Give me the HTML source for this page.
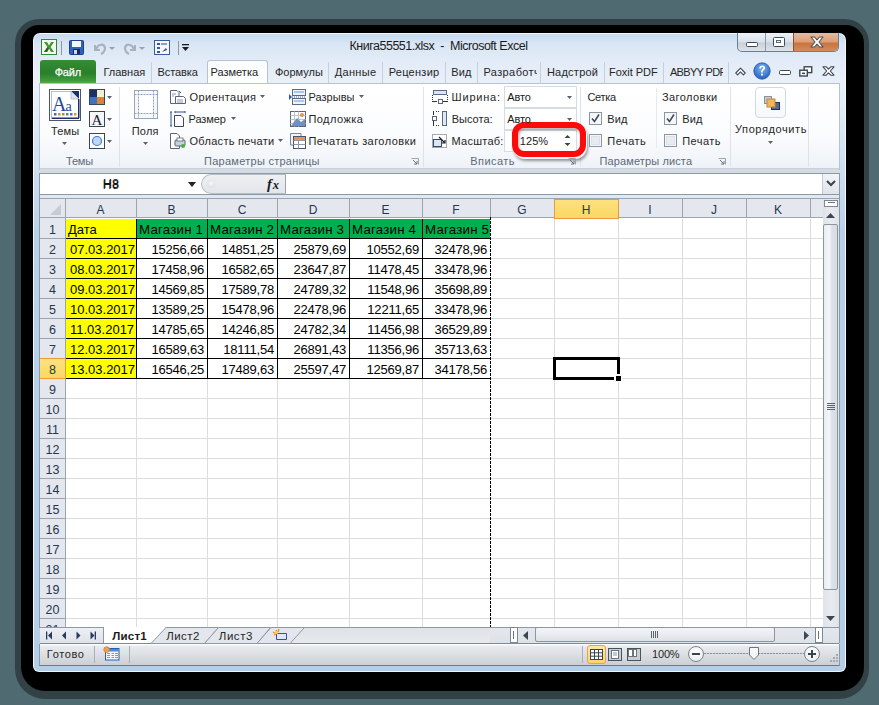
<!DOCTYPE html>
<html><head><meta charset="utf-8">
<style>
*{margin:0;padding:0;box-sizing:border-box}
html,body{width:879px;height:705px;overflow:hidden;background:#4f6a71;font-family:"Liberation Sans",sans-serif;font-size:12px;color:#1e1e1e}
.a{position:absolute}
#shadowd{left:15px;top:19px;width:854px;height:680px;border-radius:24px 24px 30px 30px;background:rgba(0,0,0,.38)}
#shadow{left:21px;top:25px;width:843px;height:666px;border-radius:18px 18px 24px 24px;background:#000}
#win{left:33px;top:33px;width:813px;height:639px;border-radius:7px 7px 6px 6px;background:linear-gradient(#c6daef,#d9e6f5 10px,#e2ebf7 26px,#e9f0f9 50px,#cfe0f1 130px,#b7d1ea 200px,#b3cee9);border:1px solid #f4f8fd;border-bottom-color:#eef4fb}
.t{white-space:nowrap;line-height:1}
</style></head><body>
<div id="shadowd" class="a"></div>
<div id="shadow" class="a"></div>
<div id="win" class="a"></div>

<!-- title bar -->
<!-- excel icon -->
<svg class="a" style="left:41px;top:39px" width="16" height="16" viewBox="0 0 16 16">
<rect x="0.5" y="0.5" width="15" height="15" fill="#f4f8f0" stroke="#2e8b2e"/>
<path d="M3 3 L6 3 L8 6.5 L10 3 L13 3 L9.6 8 L13 13 L10 13 L8 9.5 L6 13 L3 13 L6.4 8 Z" fill="#3c9a2a"/>
<path d="M3 13 L6 13 L8 9.5 L6.4 8 Z" fill="#1f6b1f"/>
</svg>
<div class="a" style="left:61px;top:41px;width:1px;height:14px;background:#8c98a8"></div>
<!-- save icon -->
<svg class="a" style="left:69px;top:40px" width="15" height="15" viewBox="0 0 15 15">
<rect x="0.5" y="0.5" width="14" height="14" rx="1" fill="#2f62b8" stroke="#1f3f8a"/>
<rect x="3" y="1" width="9" height="6" fill="#f2f5fa"/>
<rect x="4" y="9" width="7" height="5" fill="#1a2a50"/>
<rect x="5" y="10" width="3" height="4" fill="#d0d8e8"/>
</svg>
<!-- undo/redo -->
<svg class="a" style="left:92px;top:40px" width="60" height="15" viewBox="0 0 60 15">
<path d="M3 5 L3 10 L8 10" fill="none" stroke="#a9b1bb" stroke-width="2"/>
<path d="M4 9 C6 4 12 3 13 8 C13 11 11 13 9 14" fill="none" stroke="#a9b1bb" stroke-width="2.2"/>
<path d="M17 7 L23 7 L20 10 Z" fill="#9aa3ad"/>
<path d="M43 5 L43 10 L38 10" fill="none" stroke="#a9b1bb" stroke-width="2"/>
<path d="M42 9 C40 4 34 3 33 8 C33 11 35 13 37 14" fill="none" stroke="#a9b1bb" stroke-width="2.2"/>
<path d="M47 7 L53 7 L50 10 Z" fill="#9aa3ad"/>
</svg>
<!-- form icon -->
<svg class="a" style="left:154px;top:40px" width="16" height="15" viewBox="0 0 16 15">
<rect x="0.5" y="0.5" width="15" height="14" fill="#f4f7fb" stroke="#3a5a9a"/>
<rect x="3" y="3" width="3" height="2" fill="#3a5aa0"/><rect x="7" y="3" width="6" height="2" fill="#8aa0c8"/>
<rect x="3" y="7" width="3" height="2" fill="#3a5aa0"/><rect x="3" y="11" width="3" height="2" fill="#3a5aa0"/>
<path d="M8 12 L12 8 L13 10 Z" fill="#2a4a8a"/>
</svg>
<div class="a" style="left:178px;top:41px;width:1px;height:14px;background:#8c98a8"></div>
<svg class="a" style="left:181px;top:43px" width="9" height="9" viewBox="0 0 9 9"><rect x="1" y="1" width="7" height="1.3" fill="#1a1a1a"/><path d="M1 4 L8 4 L4.5 8 Z" fill="#1a1a1a"/></svg>

<!-- window buttons -->
<div class="a" style="left:737px;top:33px;width:102px;height:19px;border:1px solid #6e7f94;border-top:none;border-radius:0 0 5px 5px;background:linear-gradient(#eef2f7,#d9e0e8 50%,#c8d0da 55%,#dde3ea);overflow:hidden">
 <div class="a" style="left:27px;top:0;width:1px;height:19px;background:#8a98aa"></div>
 <div class="a" style="left:55px;top:0;width:46px;height:19px;background:linear-gradient(#e6bc9f,#dc9f78 45%,#c9743f 55%,#d68e62);border-left:1px solid #8a5030"></div>
</div>
<div class="a" style="left:746px;top:42px;width:12px;height:5px;border:1.5px solid #3e4a5a;border-radius:1.5px;background:#fff"></div>
<div class="a" style="left:773px;top:37px;width:12px;height:10px;border:1.5px solid #3e4a5a;border-radius:1.5px;background:#fff"><div class="a" style="left:2px;top:2px;width:5px;height:3px;border:1px solid #5a6676"></div></div>
<svg class="a" style="left:810px;top:36px" width="14" height="12" viewBox="0 0 14 12"><path d="M1 1 L4.5 1 L7 3.8 L9.5 1 L13 1 L9 6 L13 11 L9.5 11 L7 8.2 L4.5 11 L1 11 L5 6 Z" fill="#fff" stroke="#4a5260" stroke-width="1.1" stroke-linejoin="round"/></svg>

<!-- tabs -->
<div class="a" style="left:40px;top:60px;width:56px;height:24px;border-radius:3px 3px 0 0;background:linear-gradient(#358d35,#2a7f2a 55%,#3f9a3a 85%,#5bb04a);"></div>
<div class="a" style="left:207px;top:60px;width:61px;height:24px;border:1px solid #b6c3d4;border-bottom:none;border-radius:3px 3px 0 0;background:linear-gradient(#fbfcfe,#fff)"></div>
<div class="a" style="left:151px;top:62px;width:1px;height:21px;background:#c5d0de"></div>
<div class="a" style="left:328px;top:62px;width:1px;height:21px;background:#c5d0de"></div>
<div class="a" style="left:382px;top:62px;width:1px;height:21px;background:#c5d0de"></div>
<div class="a" style="left:445px;top:62px;width:1px;height:21px;background:#c5d0de"></div>
<div class="a" style="left:477px;top:62px;width:1px;height:21px;background:#c5d0de"></div>
<div class="a" style="left:540px;top:62px;width:1px;height:21px;background:#c5d0de"></div>
<div class="a" style="left:604px;top:62px;width:1px;height:21px;background:#c5d0de"></div>
<div class="a" style="left:663px;top:62px;width:1px;height:21px;background:#c5d0de"></div>
<div class="a" style="left:728px;top:62px;width:1px;height:21px;background:#c5d0de"></div>
<!-- ribbon right icons -->
<svg class="a" style="left:735px;top:67px" width="11" height="9" viewBox="0 0 11 9"><path d="M0.8 6 L5.5 1.2 L10.2 6 L8.4 7.8 L5.5 4.9 L2.6 7.8 Z" fill="#fff" stroke="#3e4652" stroke-width="1.1" stroke-linejoin="round"/></svg>
<svg class="a" style="left:753px;top:62px" width="18" height="18" viewBox="0 0 18 18"><defs><radialGradient id="hg" cx="50%" cy="35%" r="60%"><stop offset="0" stop-color="#7fb6f0"/><stop offset="1" stop-color="#2a66c4"/></radialGradient></defs><circle cx="9" cy="9" r="8.2" fill="url(#hg)" stroke="#2358a8" stroke-width=".8"/><path d="M6.2 6.6 C6.2 4.6 7.5 3.6 9.2 3.6 C11 3.6 12.1 4.7 12.1 6.1 C12.1 7.6 10.6 8.1 10 8.8 C9.7 9.2 9.7 9.7 9.7 10.5 L8.1 10.5 C8.1 9.3 8.2 8.6 8.9 7.9 C9.6 7.2 10.3 7 10.3 6.1 C10.3 5.5 9.9 5.1 9.2 5.1 C8.4 5.1 8 5.6 8 6.6 Z" fill="#fff"/><rect x="8" y="11.6" width="1.9" height="1.9" fill="#fff"/></svg>
<div class="a" style="left:779px;top:70px;width:12px;height:5px;border:1.5px solid #3e4652;border-radius:1.5px;background:#fff"></div>
<svg class="a" style="left:799px;top:66px" width="14" height="11" viewBox="0 0 14 11"><rect x="5.2" y="0.8" width="7.5" height="5.8" fill="#fff" stroke="#3e4652" stroke-width="1.4"/><rect x="0.8" y="4.2" width="7.5" height="5.8" fill="#fff" stroke="#3e4652" stroke-width="1.4"/><rect x="3" y="6.6" width="3" height="1.5" fill="#3e4652"/></svg>
<svg class="a" style="left:822px;top:66px" width="13" height="10" viewBox="0 0 13 10"><path d="M1 0.8 L4.2 0.8 L6.5 3.2 L8.8 0.8 L12 0.8 L8.3 5 L12 9.2 L8.8 9.2 L6.5 6.8 L4.2 9.2 L1 9.2 L4.7 5 Z" fill="#fff" stroke="#3e4652" stroke-width="1.1" stroke-linejoin="round"/></svg>

<!-- ribbon body -->
<div class="a" style="left:39px;top:83px;width:801px;height:87px;background:linear-gradient(#ffffff,#fbfcfe 60%,#eef2f7);border:1px solid #b6c3d4;border-bottom-color:#a9b6c6"></div>
<div class="a" style="left:40px;top:168px;width:799px;height:2px;background:#c7d0db"></div>
<!-- group separators -->
<div class="a" style="left:119px;top:87px;width:1px;height:80px;background:#dde3ea"></div>
<div class="a" style="left:423px;top:87px;width:1px;height:80px;background:#dde3ea"></div>
<div class="a" style="left:580px;top:87px;width:1px;height:80px;background:#dde3ea"></div>
<div class="a" style="left:656px;top:88px;width:1px;height:60px;background:#e6eaef"></div>
<div class="a" style="left:730px;top:87px;width:1px;height:80px;background:#dde3ea"></div>
<div class="a" style="left:808px;top:87px;width:1px;height:80px;background:#dde3ea"></div>

<!-- Themes -->
<svg class="a" style="left:49px;top:89px" width="32" height="32" viewBox="0 0 32 32">
<rect x="0.5" y="0.5" width="31" height="31" fill="#fff" stroke="#4a5566"/>
<rect x="2.5" y="2.5" width="27" height="27" fill="#fff" stroke="#b9c0ca"/>
<path d="M22 2 L30 2 L30 10 Z" fill="#1f2d6e"/><path d="M22 2 L22 10 L30 10 Z" fill="#dde3ee" stroke="#9aa3b0" stroke-width=".6"/>
<rect x="29" y="10" width="1.5" height="19" fill="#1f2d6e"/><rect x="3" y="28.5" width="27" height="1.5" fill="#1f2d6e"/>
<text x="3" y="21.5" font-family="Liberation Serif" font-size="20" fill="#24479a">A</text>
<text x="16.5" y="21.5" font-family="Liberation Serif" font-size="14" fill="#24479a">a</text>
<rect x="5" y="24" width="2.5" height="2.5" fill="#3c69b8"/><rect x="9" y="24" width="2.5" height="2.5" fill="#d9853a"/><rect x="13" y="24" width="2.5" height="2.5" fill="#7aa05a"/><rect x="17" y="24" width="2.5" height="2.5" fill="#6a7aa0"/><rect x="21" y="24" width="2.5" height="2.5" fill="#3f78c8"/><rect x="25" y="24" width="2.5" height="2.5" fill="#e09a30"/>
</svg>
<svg class="a" style="left:62px;top:142px" width="5" height="3"><path d="M0 0 L5 0 L2.5 3 Z" fill="#5a626c"/></svg>
<svg class="a" style="left:89px;top:89px" width="16" height="16" viewBox="0 0 16 16">
<rect x="0.5" y="0.5" width="15" height="15" fill="#fff" stroke="#3a4556"/>
<rect x="1" y="1" width="7" height="7" fill="#1c3068"/><rect x="8" y="1" width="7" height="7" fill="#f3f0d2"/>
<rect x="1" y="8" width="7" height="7" fill="#3f73c2"/><rect x="8" y="8" width="7" height="7" fill="#d9823a"/>
</svg>
<svg class="a" style="left:107px;top:96px" width="5" height="3"><path d="M0 0 L5 0 L2.5 3 Z" fill="#5a626c"/></svg>
<svg class="a" style="left:89px;top:111px" width="16" height="16" viewBox="0 0 16 16">
<rect x="0.5" y="0.5" width="15" height="15" fill="#f3f6fa" stroke="#3a4556"/>
<text x="8" y="14" font-family="Liberation Serif" font-size="15" fill="#151b2a" text-anchor="middle">A</text>
</svg>
<svg class="a" style="left:107px;top:118px" width="5" height="3"><path d="M0 0 L5 0 L2.5 3 Z" fill="#5a626c"/></svg>
<svg class="a" style="left:89px;top:133px" width="16" height="16" viewBox="0 0 16 16">
<rect x="0.5" y="0.5" width="15" height="15" fill="#fff" stroke="#3a4556"/>
<circle cx="8" cy="8" r="4.5" fill="#bcd8f5" stroke="#3f7dd0" stroke-width="1.2"/>
</svg>
<svg class="a" style="left:107px;top:140px" width="5" height="3"><path d="M0 0 L5 0 L2.5 3 Z" fill="#5a626c"/></svg>

<!-- Поля -->
<svg class="a" style="left:133px;top:90px" width="26" height="30" viewBox="0 0 26 30">
<rect x="1.5" y="0.5" width="23" height="28" fill="#f6f7f9" stroke="#9aa6b4"/>
<path d="M1.5 4.5 H24.5 M1.5 23.5 H24.5 M5.5 0.5 V28.5 M20.5 0.5 V28.5" stroke="#8fa4bd" stroke-width="1" stroke-dasharray="2 1"/>
<rect x="6" y="5" width="14" height="18" fill="#fff"/>
</svg>
<svg class="a" style="left:143px;top:142px" width="5" height="3"><path d="M0 0 L5 0 L2.5 3 Z" fill="#5a626c"/></svg>

<!-- Page setup small buttons -->
<svg class="a" style="left:170px;top:90px" width="16" height="14" viewBox="0 0 16 14">
<path d="M0.5 0.5 H7 L9 2.5 V13.5 H0.5 Z" fill="#fff" stroke="#5a6678"/>
<path d="M5.5 6.5 H13.5 L15.5 8.5 V13.5 H5.5 Z" fill="#fff" stroke="#5a6678"/>
<path d="M2 4 H6 M2 6 H4 M7 10 H13 M7 12 H13" stroke="#8a98b0"/>
<path d="M9 1 L11 3" stroke="#2a58a8"/>
</svg>
<svg class="a" style="left:260px;top:95px" width="6" height="3"><path d="M0 0 L5 0 L2.5 3 Z" fill="#5a626c"/></svg>
<svg class="a" style="left:170px;top:111px" width="16" height="16" viewBox="0 0 16 16">
<path d="M1 1 V15 M0 1 H2 M0 15 H2 M5 1 H15 M5 0 V2 M15 0 V2" stroke="#2f4f9a" stroke-width="1"/>
<path d="M4.5 4.5 H11 L13.5 7 V15.5 H4.5 Z" fill="#fff" stroke="#3d4858"/>
</svg>
<svg class="a" style="left:231px;top:117px" width="6" height="3"><path d="M0 0 L5 0 L2.5 3 Z" fill="#5a626c"/></svg>
<svg class="a" style="left:170px;top:133px" width="16" height="16" viewBox="0 0 16 16">
<path d="M0.5 0.5 H7 L9.5 3 V15.5 H0.5 Z" fill="#fff" stroke="#5a6678"/>
<rect x="5" y="7" width="10" height="6" rx="1" fill="#c9d2dc" stroke="#5a6678"/>
<rect x="7" y="5" width="6" height="3" fill="#fff" stroke="#5a6678" stroke-width=".8"/>
<circle cx="13" cy="13" r="2" fill="#4caf3a"/>
</svg>
<svg class="a" style="left:278px;top:139px" width="6" height="3"><path d="M0 0 L5 0 L2.5 3 Z" fill="#5a626c"/></svg>

<svg class="a" style="left:289px;top:89px" width="17" height="16" viewBox="0 0 17 16">
<rect x="3.5" y="0.5" width="13" height="6" fill="#eef3fa" stroke="#5a6a80"/>
<rect x="3.5" y="9.5" width="13" height="6" fill="#eef3fa" stroke="#5a6a80"/>
<path d="M5 3 H15 M5 12 H15" stroke="#6a9ad8"/>
<path d="M3 8 H16" stroke="#3a5aa8" stroke-dasharray="1 1"/>
<path d="M0 5 L3 8 L0 11 Z" fill="#2a58b8"/>
</svg>
<svg class="a" style="left:359px;top:95px" width="6" height="3"><path d="M0 0 L5 0 L2.5 3 Z" fill="#5a626c"/></svg>
<svg class="a" style="left:290px;top:111px" width="16" height="16" viewBox="0 0 16 16">
<rect x="0.5" y="0.5" width="15" height="15" fill="#fff" stroke="#5a6678"/>
<path d="M0.5 4.5 H15.5 M0.5 8.5 H15.5 M0.5 12.5 H15.5 M4.5 0.5 V15.5 M8.5 0.5 V15.5" stroke="#b8c4d4"/>
<path d="M1 15 L7 7 L11 11 L15 8 V15 Z" fill="#6f90c0"/>
<circle cx="12" cy="4" r="2" fill="#e8944a"/>
</svg>
<svg class="a" style="left:290px;top:133px" width="16" height="16" viewBox="0 0 16 16">
<path d="M0.5 0.5 H11 V12 H0.5 Z" fill="#f2f4f7" stroke="#7a8698"/>
<rect x="3.5" y="3.5" width="12" height="12" fill="#fff" stroke="#4a5668"/>
<path d="M3.5 7.5 H15.5 M3.5 11.5 H15.5 M8.5 7.5 V15.5" stroke="#8a98b0"/>
<rect x="4" y="4" width="11" height="3" fill="#e8944a"/>
</svg>
<svg class="a" style="left:411px;top:158px" width="8" height="7" viewBox="0 0 8 7"><path d="M0.5 0.5 H7.5 V6.5" fill="none" stroke="#9aa4b0"/><path d="M2 2 L6 6 M6 3 V6 H3" fill="none" stroke="#6a7480"/></svg>

<!-- Вписать -->
<svg class="a" style="left:432px;top:90px" width="16" height="14" viewBox="0 0 16 14">
<rect x="1.5" y="0.5" width="13" height="4" fill="#dde7f4" stroke="#5a6a80"/>
<path d="M0.5 5 V10 M15.5 5 V10" stroke="#333" stroke-dasharray="1 1"/>
<path d="M0 11.5 H5 M11 11.5 H16" stroke="#333"/>
<rect x="6.5" y="9.5" width="4" height="4" fill="#fff" stroke="#5a6678"/>
</svg>
<svg class="a" style="left:432px;top:111px" width="16" height="15" viewBox="0 0 16 15">
<rect x="10.5" y="0.5" width="4" height="14" fill="#dde7f4" stroke="#5a6a80"/>
<path d="M1.5 0 V4 M1.5 10 V15" stroke="#333"/><path d="M4 0.5 H8 M4 14.5 H8" stroke="#333" stroke-dasharray="1 1"/>
<rect x="0.5" y="5.5" width="4" height="4" fill="#fff" stroke="#5a6678"/>
</svg>
<svg class="a" style="left:432px;top:134px" width="15" height="14" viewBox="0 0 15 14">
<rect x="0.5" y="0.5" width="14" height="13" fill="#fff" stroke="#4a5668" stroke-dasharray="1 1"/>
<rect x="1.5" y="5.5" width="8" height="7" fill="#dde7f4" stroke="#3a4a68"/>
<path d="M7 3 L13 9 M13 6 V9 H10" fill="none" stroke="#222" stroke-width="1.2"/>
</svg>
<div class="a" style="left:504px;top:86px;width:73px;height:22px;background:#fff;border:1px solid #d5dce5"></div>
<div class="a" style="left:504px;top:108px;width:73px;height:22px;background:#fff;border:1px solid #d5dce5"></div>
<div class="a" style="left:504px;top:130px;width:73px;height:22px;background:#fff;border:1px solid #d5dce5"></div>
<svg class="a" style="left:567px;top:96px" width="6" height="3"><path d="M0 0 L5 0 L2.5 3 Z" fill="#5a626c"/></svg>
<svg class="a" style="left:567px;top:118px" width="6" height="3"><path d="M0 0 L5 0 L2.5 3 Z" fill="#5a626c"/></svg>
<svg class="a" style="left:564px;top:134px" width="7" height="13"><path d="M0.5 4 L3.5 1 L6.5 4 Z M0.5 9 L3.5 12 L6.5 9 Z" fill="#3a4450"/></svg>
<div class="a" style="left:513px;top:124px;width:74px;height:35px;border-radius:12px;box-shadow:1px 2px 3px rgba(0,0,0,.4)"></div>
<div class="a" style="left:512px;top:122px;width:74px;height:35px;border:6px solid #ff0a0a;border-radius:12px;box-shadow:inset 1px 2px 3px rgba(0,0,0,.3)"></div>
<svg class="a" style="left:568px;top:158px" width="8" height="7" viewBox="0 0 8 7"><path d="M0.5 0.5 H7.5 V6.5" fill="none" stroke="#9aa4b0"/><path d="M2 2 L6 6 M6 3 V6 H3" fill="none" stroke="#6a7480"/></svg>

<!-- Параметры листа -->
<svg class="a" style="left:589px;top:112px" width="13" height="13" viewBox="0 0 13 13"><rect x="0.5" y="0.5" width="12" height="12" fill="#f4f6f8" stroke="#8c96a2"/><path d="M3 6.5 L5.5 9.5 L10 2.5" fill="none" stroke="#3a4658" stroke-width="1.5"/></svg>
<svg class="a" style="left:589px;top:134px" width="13" height="13" viewBox="0 0 13 13"><rect x="0.5" y="0.5" width="12" height="12" fill="#f4f6f8" stroke="#8c96a2"/><rect x="2.5" y="2.5" width="8" height="8" fill="#e8ecf0" stroke="#dde2e8"/></svg>
<svg class="a" style="left:664px;top:112px" width="13" height="13" viewBox="0 0 13 13"><rect x="0.5" y="0.5" width="12" height="12" fill="#f4f6f8" stroke="#8c96a2"/><path d="M3 6.5 L5.5 9.5 L10 2.5" fill="none" stroke="#3a4658" stroke-width="1.5"/></svg>
<svg class="a" style="left:664px;top:134px" width="13" height="13" viewBox="0 0 13 13"><rect x="0.5" y="0.5" width="12" height="12" fill="#f4f6f8" stroke="#8c96a2"/><rect x="2.5" y="2.5" width="8" height="8" fill="#e8ecf0" stroke="#dde2e8"/></svg>
<svg class="a" style="left:718px;top:158px" width="8" height="7" viewBox="0 0 8 7"><path d="M0.5 0.5 H7.5 V6.5" fill="none" stroke="#9aa4b0"/><path d="M2 2 L6 6 M6 3 V6 H3" fill="none" stroke="#6a7480"/></svg>

<!-- Упорядочить -->
<div class="a" style="left:755px;top:87px;width:31px;height:31px;border:1px solid #d3d9e0;border-radius:4px;background:linear-gradient(#fff,#f6f8fa)"></div>
<svg class="a" style="left:764px;top:96px" width="16" height="14" viewBox="0 0 16 14">
<rect x="0.5" y="0.5" width="7" height="7" fill="#c8ccd4" stroke="#8a929e"/>
<rect x="7.5" y="6.5" width="8" height="7" fill="#5a6a8a" stroke="#1f2f60"/>
<rect x="3" y="3" width="8" height="8" fill="#f0b75a" stroke="#c9853a"/>
</svg>
<svg class="a" style="left:768px;top:141px" width="5" height="3"><path d="M0 0 L5 0 L2.5 3 Z" fill="#5a626c"/></svg>



<!-- formula bar -->
<div class="a" style="left:40px;top:169px;width:799px;height:4px;background:#d5dbe3"></div>
<div class="a" style="left:39px;top:173px;width:801px;height:22px;background:#fff;border-top:1px solid #8e99a6;border-bottom:1px solid #8e99a6"></div>
<div class="a" style="left:40px;top:195px;width:799px;height:3px;background:#dfe8f3"></div>
<div class="a" style="left:39px;top:173px;width:1px;height:455px;background:#8e99a6"></div>
<div class="a t" style="left:103px;top:178px;font-size:12.5px;color:#111">H8</div>
<svg class="a" style="left:188px;top:182px" width="8" height="5"><path d="M0 0 L8 0 L4 5 Z" fill="#222"/></svg>
<div class="a" style="left:201px;top:174px;width:85px;height:20px;background:linear-gradient(#eef0f3,#e2e5ea);border-radius:10px 0 0 10px;border:1px solid #b8bec6;border-right:1px solid #9aa2ac"></div>
<div class="a" style="left:207px;top:180px;width:8px;height:8px;border-radius:4px;background:radial-gradient(circle at 50% 40%,#fafafa,#d0d4da)"></div>
<div class="a t" style="left:267px;top:177px;font-size:14.5px;font-family:'Liberation Serif',serif;font-style:italic;font-weight:bold;color:#1a1a1a;letter-spacing:1px">f<span style="font-size:12.5px">x</span></div>
<div class="a" style="left:822px;top:174px;width:17px;height:20px;background:linear-gradient(#f2f4f7,#e0e4ea);border-left:1px solid #c4cad2"></div>
<svg class="a" style="left:826px;top:180px" width="10" height="7"><path d="M1 1 L5 5 L9 1" fill="none" stroke="#3a4450" stroke-width="2"/></svg>

<div class="a" style="left:40px;top:198px;width:783px;height:429px;background:#fff;overflow:hidden">
<div class="a" style="left:0;top:0;width:783px;height:20px;background:#e4e8ee;border-top:1px solid #9ba5b0;border-bottom:1px solid #9ba5b0"></div>
<div class="a" style="left:0;top:20px;width:25px;height:409px;background:#e4e8ee"></div>
<svg class="a" style="left:10px;top:6px" width="12" height="11"><path d="M11 0 L11 11 L0 11 Z" fill="#c6ccd4"/></svg>
<div class="a" style="left:25px;top:40px;width:758px;height:1px;background:#dadcdf"></div>
<div class="a" style="left:0;top:40px;width:25px;height:1px;background:#9ba5b0"></div>
<div class="a" style="left:25px;top:60px;width:758px;height:1px;background:#dadcdf"></div>
<div class="a" style="left:0;top:60px;width:25px;height:1px;background:#9ba5b0"></div>
<div class="a" style="left:25px;top:80px;width:758px;height:1px;background:#dadcdf"></div>
<div class="a" style="left:0;top:80px;width:25px;height:1px;background:#9ba5b0"></div>
<div class="a" style="left:25px;top:100px;width:758px;height:1px;background:#dadcdf"></div>
<div class="a" style="left:0;top:100px;width:25px;height:1px;background:#9ba5b0"></div>
<div class="a" style="left:25px;top:120px;width:758px;height:1px;background:#dadcdf"></div>
<div class="a" style="left:0;top:120px;width:25px;height:1px;background:#9ba5b0"></div>
<div class="a" style="left:25px;top:140px;width:758px;height:1px;background:#dadcdf"></div>
<div class="a" style="left:0;top:140px;width:25px;height:1px;background:#9ba5b0"></div>
<div class="a" style="left:25px;top:160px;width:758px;height:1px;background:#dadcdf"></div>
<div class="a" style="left:0;top:160px;width:25px;height:1px;background:#9ba5b0"></div>
<div class="a" style="left:25px;top:180px;width:758px;height:1px;background:#dadcdf"></div>
<div class="a" style="left:0;top:180px;width:25px;height:1px;background:#9ba5b0"></div>
<div class="a" style="left:25px;top:200px;width:758px;height:1px;background:#dadcdf"></div>
<div class="a" style="left:0;top:200px;width:25px;height:1px;background:#9ba5b0"></div>
<div class="a" style="left:25px;top:220px;width:758px;height:1px;background:#dadcdf"></div>
<div class="a" style="left:0;top:220px;width:25px;height:1px;background:#9ba5b0"></div>
<div class="a" style="left:25px;top:240px;width:758px;height:1px;background:#dadcdf"></div>
<div class="a" style="left:0;top:240px;width:25px;height:1px;background:#9ba5b0"></div>
<div class="a" style="left:25px;top:260px;width:758px;height:1px;background:#dadcdf"></div>
<div class="a" style="left:0;top:260px;width:25px;height:1px;background:#9ba5b0"></div>
<div class="a" style="left:25px;top:280px;width:758px;height:1px;background:#dadcdf"></div>
<div class="a" style="left:0;top:280px;width:25px;height:1px;background:#9ba5b0"></div>
<div class="a" style="left:25px;top:300px;width:758px;height:1px;background:#dadcdf"></div>
<div class="a" style="left:0;top:300px;width:25px;height:1px;background:#9ba5b0"></div>
<div class="a" style="left:25px;top:320px;width:758px;height:1px;background:#dadcdf"></div>
<div class="a" style="left:0;top:320px;width:25px;height:1px;background:#9ba5b0"></div>
<div class="a" style="left:25px;top:340px;width:758px;height:1px;background:#dadcdf"></div>
<div class="a" style="left:0;top:340px;width:25px;height:1px;background:#9ba5b0"></div>
<div class="a" style="left:25px;top:360px;width:758px;height:1px;background:#dadcdf"></div>
<div class="a" style="left:0;top:360px;width:25px;height:1px;background:#9ba5b0"></div>
<div class="a" style="left:25px;top:380px;width:758px;height:1px;background:#dadcdf"></div>
<div class="a" style="left:0;top:380px;width:25px;height:1px;background:#9ba5b0"></div>
<div class="a" style="left:25px;top:400px;width:758px;height:1px;background:#dadcdf"></div>
<div class="a" style="left:0;top:400px;width:25px;height:1px;background:#9ba5b0"></div>
<div class="a" style="left:25px;top:420px;width:758px;height:1px;background:#dadcdf"></div>
<div class="a" style="left:0;top:420px;width:25px;height:1px;background:#9ba5b0"></div>
<div class="a" style="left:25px;top:440px;width:758px;height:1px;background:#dadcdf"></div>
<div class="a" style="left:0;top:440px;width:25px;height:1px;background:#9ba5b0"></div>
<div class="a" style="left:96px;top:21px;width:1px;height:408px;background:#dadcdf"></div>
<div class="a" style="left:96px;top:1px;width:1px;height:19px;background:#9ba5b0"></div>
<div class="a" style="left:167px;top:21px;width:1px;height:408px;background:#dadcdf"></div>
<div class="a" style="left:167px;top:1px;width:1px;height:19px;background:#9ba5b0"></div>
<div class="a" style="left:237px;top:21px;width:1px;height:408px;background:#dadcdf"></div>
<div class="a" style="left:237px;top:1px;width:1px;height:19px;background:#9ba5b0"></div>
<div class="a" style="left:309px;top:21px;width:1px;height:408px;background:#dadcdf"></div>
<div class="a" style="left:309px;top:1px;width:1px;height:19px;background:#9ba5b0"></div>
<div class="a" style="left:382px;top:21px;width:1px;height:408px;background:#dadcdf"></div>
<div class="a" style="left:382px;top:1px;width:1px;height:19px;background:#9ba5b0"></div>
<div class="a" style="left:450px;top:21px;width:1px;height:408px;background:#dadcdf"></div>
<div class="a" style="left:450px;top:1px;width:1px;height:19px;background:#9ba5b0"></div>
<div class="a" style="left:514px;top:21px;width:1px;height:408px;background:#dadcdf"></div>
<div class="a" style="left:514px;top:1px;width:1px;height:19px;background:#9ba5b0"></div>
<div class="a" style="left:578px;top:21px;width:1px;height:408px;background:#dadcdf"></div>
<div class="a" style="left:578px;top:1px;width:1px;height:19px;background:#9ba5b0"></div>
<div class="a" style="left:642px;top:21px;width:1px;height:408px;background:#dadcdf"></div>
<div class="a" style="left:642px;top:1px;width:1px;height:19px;background:#9ba5b0"></div>
<div class="a" style="left:706px;top:21px;width:1px;height:408px;background:#dadcdf"></div>
<div class="a" style="left:706px;top:1px;width:1px;height:19px;background:#9ba5b0"></div>
<div class="a" style="left:770px;top:21px;width:1px;height:408px;background:#dadcdf"></div>
<div class="a" style="left:770px;top:1px;width:1px;height:19px;background:#9ba5b0"></div>
<div class="a" style="left:783px;top:21px;width:1px;height:408px;background:#dadcdf"></div>
<div class="a" style="left:783px;top:1px;width:1px;height:19px;background:#9ba5b0"></div>
<div class="a" style="left:25px;top:1px;width:1px;height:428px;background:#9ba5b0"></div>
<div class="a" style="left:514px;top:1px;width:65px;height:20px;background:linear-gradient(#fde17e,#fbd865);border:1px solid #ea9a3e"></div>
<div class="a" style="left:0px;top:160px;width:26px;height:21px;background:linear-gradient(#fde17e,#fbd865);border:1px solid #ea9a3e;border-left:none"></div>
<div class="a t" style="left:40.5px;width:40px;top:6px;text-align:center;font-size:12px;color:#25364f">A</div>
<div class="a t" style="left:111.5px;width:40px;top:6px;text-align:center;font-size:12px;color:#25364f">B</div>
<div class="a t" style="left:182.0px;width:40px;top:6px;text-align:center;font-size:12px;color:#25364f">C</div>
<div class="a t" style="left:253.0px;width:40px;top:6px;text-align:center;font-size:12px;color:#25364f">D</div>
<div class="a t" style="left:325.5px;width:40px;top:6px;text-align:center;font-size:12px;color:#25364f">E</div>
<div class="a t" style="left:396.0px;width:40px;top:6px;text-align:center;font-size:12px;color:#25364f">F</div>
<div class="a t" style="left:462.0px;width:40px;top:6px;text-align:center;font-size:12px;color:#25364f">G</div>
<div class="a t" style="left:526.0px;width:40px;top:6px;text-align:center;font-size:12px;color:#25364f">H</div>
<div class="a t" style="left:590.0px;width:40px;top:6px;text-align:center;font-size:12px;color:#25364f">I</div>
<div class="a t" style="left:654.0px;width:40px;top:6px;text-align:center;font-size:12px;color:#25364f">J</div>
<div class="a t" style="left:718.0px;width:40px;top:6px;text-align:center;font-size:12px;color:#25364f">K</div>
<div class="a t" style="left:0;width:25px;top:26px;text-align:center;font-size:12.5px;color:#25364f">1</div>
<div class="a t" style="left:0;width:25px;top:46px;text-align:center;font-size:12.5px;color:#25364f">2</div>
<div class="a t" style="left:0;width:25px;top:66px;text-align:center;font-size:12.5px;color:#25364f">3</div>
<div class="a t" style="left:0;width:25px;top:86px;text-align:center;font-size:12.5px;color:#25364f">4</div>
<div class="a t" style="left:0;width:25px;top:106px;text-align:center;font-size:12.5px;color:#25364f">5</div>
<div class="a t" style="left:0;width:25px;top:126px;text-align:center;font-size:12.5px;color:#25364f">6</div>
<div class="a t" style="left:0;width:25px;top:146px;text-align:center;font-size:12.5px;color:#25364f">7</div>
<div class="a t" style="left:0;width:25px;top:166px;text-align:center;font-size:12.5px;color:#25364f">8</div>
<div class="a t" style="left:0;width:25px;top:186px;text-align:center;font-size:12.5px;color:#25364f">9</div>
<div class="a t" style="left:0;width:25px;top:206px;text-align:center;font-size:12.5px;color:#25364f">10</div>
<div class="a t" style="left:0;width:25px;top:226px;text-align:center;font-size:12.5px;color:#25364f">11</div>
<div class="a t" style="left:0;width:25px;top:246px;text-align:center;font-size:12.5px;color:#25364f">12</div>
<div class="a t" style="left:0;width:25px;top:266px;text-align:center;font-size:12.5px;color:#25364f">13</div>
<div class="a t" style="left:0;width:25px;top:286px;text-align:center;font-size:12.5px;color:#25364f">14</div>
<div class="a t" style="left:0;width:25px;top:306px;text-align:center;font-size:12.5px;color:#25364f">15</div>
<div class="a t" style="left:0;width:25px;top:326px;text-align:center;font-size:12.5px;color:#25364f">16</div>
<div class="a t" style="left:0;width:25px;top:346px;text-align:center;font-size:12.5px;color:#25364f">17</div>
<div class="a t" style="left:0;width:25px;top:366px;text-align:center;font-size:12.5px;color:#25364f">18</div>
<div class="a t" style="left:0;width:25px;top:386px;text-align:center;font-size:12.5px;color:#25364f">19</div>
<div class="a t" style="left:0;width:25px;top:406px;text-align:center;font-size:12.5px;color:#25364f">20</div>
<div class="a t" style="left:0;width:25px;top:426px;text-align:center;font-size:12.5px;color:#25364f">21</div>
</div><!-- data -->
<div class="a" style="left:66px;top:219px;width:70px;height:159px;background:#ffff00"></div>
<div class="a" style="left:137px;top:219px;width:353px;height:19px;background:#00b050"></div>
<div class="a" style="left:66px;top:238px;width:424px;height:1px;background:#000"></div>
<div class="a" style="left:66px;top:258px;width:424px;height:1px;background:#000"></div>
<div class="a" style="left:66px;top:278px;width:424px;height:1px;background:#000"></div>
<div class="a" style="left:66px;top:298px;width:424px;height:1px;background:#000"></div>
<div class="a" style="left:66px;top:318px;width:424px;height:1px;background:#000"></div>
<div class="a" style="left:66px;top:338px;width:424px;height:1px;background:#000"></div>
<div class="a" style="left:66px;top:358px;width:424px;height:1px;background:#000"></div>
<div class="a" style="left:66px;top:378px;width:424px;height:1px;background:#000"></div>
<div class="a" style="left:136px;top:219px;width:1px;height:159px;background:#000"></div>
<div class="a" style="left:207px;top:219px;width:1px;height:159px;background:#000"></div>
<div class="a" style="left:277px;top:219px;width:1px;height:159px;background:#000"></div>
<div class="a" style="left:349px;top:219px;width:1px;height:159px;background:#000"></div>
<div class="a" style="left:422px;top:219px;width:1px;height:159px;background:#000"></div>
<div class="a" style="left:490px;top:217px;width:1px;height:410px;background:repeating-linear-gradient(#000 0 3px,#fff 3px 4px)"></div>
<div class="a t" style="left:68px;top:223px;font-size:13px;color:#000">Дата</div>
<div class="a t" style="left:139px;top:223px;font-size:13.3px;color:#000;letter-spacing:.2px">Магазин 1</div>
<div class="a t" style="left:210px;top:223px;font-size:13.3px;color:#000;letter-spacing:.2px">Магазин 2</div>
<div class="a t" style="left:280px;top:223px;font-size:13.3px;color:#000;letter-spacing:.2px">Магазин 3</div>
<div class="a t" style="left:352px;top:223px;font-size:13.3px;color:#000;letter-spacing:.2px">Магазин 4</div>
<div class="a t" style="left:425px;top:223px;font-size:13.3px;color:#000;letter-spacing:.2px">Магазин 5</div>
<div class="a t" style="left:70px;top:243px;font-size:13px;color:#000;letter-spacing:0px">07.03.2017</div>
<div class="a t" style="right:675px;top:243px;font-size:13px;color:#000;letter-spacing:-.2px;text-align:right">15256,66</div>
<div class="a t" style="right:605px;top:243px;font-size:13px;color:#000;letter-spacing:-.2px;text-align:right">14851,25</div>
<div class="a t" style="right:533px;top:243px;font-size:13px;color:#000;letter-spacing:-.2px;text-align:right">25879,69</div>
<div class="a t" style="right:460px;top:243px;font-size:13px;color:#000;letter-spacing:-.2px;text-align:right">10552,69</div>
<div class="a t" style="right:392px;top:243px;font-size:13px;color:#000;letter-spacing:-.2px;text-align:right">32478,96</div>
<div class="a t" style="left:70px;top:263px;font-size:13px;color:#000;letter-spacing:0px">08.03.2017</div>
<div class="a t" style="right:675px;top:263px;font-size:13px;color:#000;letter-spacing:-.2px;text-align:right">17458,96</div>
<div class="a t" style="right:605px;top:263px;font-size:13px;color:#000;letter-spacing:-.2px;text-align:right">16582,65</div>
<div class="a t" style="right:533px;top:263px;font-size:13px;color:#000;letter-spacing:-.2px;text-align:right">23647,87</div>
<div class="a t" style="right:460px;top:263px;font-size:13px;color:#000;letter-spacing:-.2px;text-align:right">11478,45</div>
<div class="a t" style="right:392px;top:263px;font-size:13px;color:#000;letter-spacing:-.2px;text-align:right">33478,96</div>
<div class="a t" style="left:70px;top:283px;font-size:13px;color:#000;letter-spacing:0px">09.03.2017</div>
<div class="a t" style="right:675px;top:283px;font-size:13px;color:#000;letter-spacing:-.2px;text-align:right">14569,85</div>
<div class="a t" style="right:605px;top:283px;font-size:13px;color:#000;letter-spacing:-.2px;text-align:right">17589,78</div>
<div class="a t" style="right:533px;top:283px;font-size:13px;color:#000;letter-spacing:-.2px;text-align:right">24789,32</div>
<div class="a t" style="right:460px;top:283px;font-size:13px;color:#000;letter-spacing:-.2px;text-align:right">11548,96</div>
<div class="a t" style="right:392px;top:283px;font-size:13px;color:#000;letter-spacing:-.2px;text-align:right">35698,89</div>
<div class="a t" style="left:70px;top:303px;font-size:13px;color:#000;letter-spacing:0px">10.03.2017</div>
<div class="a t" style="right:675px;top:303px;font-size:13px;color:#000;letter-spacing:-.2px;text-align:right">13589,25</div>
<div class="a t" style="right:605px;top:303px;font-size:13px;color:#000;letter-spacing:-.2px;text-align:right">15478,96</div>
<div class="a t" style="right:533px;top:303px;font-size:13px;color:#000;letter-spacing:-.2px;text-align:right">22478,96</div>
<div class="a t" style="right:460px;top:303px;font-size:13px;color:#000;letter-spacing:-.2px;text-align:right">12211,65</div>
<div class="a t" style="right:392px;top:303px;font-size:13px;color:#000;letter-spacing:-.2px;text-align:right">33478,96</div>
<div class="a t" style="left:70px;top:323px;font-size:13px;color:#000;letter-spacing:0px">11.03.2017</div>
<div class="a t" style="right:675px;top:323px;font-size:13px;color:#000;letter-spacing:-.2px;text-align:right">14785,65</div>
<div class="a t" style="right:605px;top:323px;font-size:13px;color:#000;letter-spacing:-.2px;text-align:right">14246,85</div>
<div class="a t" style="right:533px;top:323px;font-size:13px;color:#000;letter-spacing:-.2px;text-align:right">24782,34</div>
<div class="a t" style="right:460px;top:323px;font-size:13px;color:#000;letter-spacing:-.2px;text-align:right">11456,98</div>
<div class="a t" style="right:392px;top:323px;font-size:13px;color:#000;letter-spacing:-.2px;text-align:right">36529,89</div>
<div class="a t" style="left:70px;top:343px;font-size:13px;color:#000;letter-spacing:0px">12.03.2017</div>
<div class="a t" style="right:675px;top:343px;font-size:13px;color:#000;letter-spacing:-.2px;text-align:right">16589,63</div>
<div class="a t" style="right:605px;top:343px;font-size:13px;color:#000;letter-spacing:-.2px;text-align:right">18111,54</div>
<div class="a t" style="right:533px;top:343px;font-size:13px;color:#000;letter-spacing:-.2px;text-align:right">26891,43</div>
<div class="a t" style="right:460px;top:343px;font-size:13px;color:#000;letter-spacing:-.2px;text-align:right">11356,96</div>
<div class="a t" style="right:392px;top:343px;font-size:13px;color:#000;letter-spacing:-.2px;text-align:right">35713,63</div>
<div class="a t" style="left:70px;top:363px;font-size:13px;color:#000;letter-spacing:0px">13.03.2017</div>
<div class="a t" style="right:675px;top:363px;font-size:13px;color:#000;letter-spacing:-.2px;text-align:right">16546,25</div>
<div class="a t" style="right:605px;top:363px;font-size:13px;color:#000;letter-spacing:-.2px;text-align:right">17489,63</div>
<div class="a t" style="right:533px;top:363px;font-size:13px;color:#000;letter-spacing:-.2px;text-align:right">25597,47</div>
<div class="a t" style="right:460px;top:363px;font-size:13px;color:#000;letter-spacing:-.2px;text-align:right">12569,87</div>
<div class="a t" style="right:392px;top:363px;font-size:13px;color:#000;letter-spacing:-.2px;text-align:right">34178,56</div>
<div class="a" style="left:553px;top:357px;width:67px;height:23px;border:3px solid #000"></div>
<div class="a" style="left:614px;top:374px;width:8px;height:8px;background:#fff"></div>
<div class="a" style="left:616px;top:376px;width:5px;height:5px;background:#000"></div><!-- vscroll -->
<div class="a" style="left:823px;top:198px;width:16px;height:429px;background:linear-gradient(90deg,#dfe3e8,#e8ebef 50%,#dfe3e8);border-top:1px solid #9ba5b0"></div>
<div class="a" style="left:839px;top:173px;width:1px;height:470px;background:#8e99a6"></div>
<div class="a" style="left:824px;top:200px;width:14px;height:7px;background:#fff;border:1px solid #7d8894"></div>
<div class="a" style="left:828px;top:202px;width:7px;height:1px;background:#6a7480"></div>
<svg class="a" style="left:826px;top:213px" width="9" height="5"><path d="M0 5 L4.5 0 L9 5 Z" fill="#3e4650"/></svg>
<div class="a" style="left:823px;top:224px;width:15px;height:366px;background:linear-gradient(90deg,#e9ecf1,#f4f6f9 40%,#dde2e8 60%,#d6dce3);border:1px solid #8c96a2;border-radius:2px"></div>
<div class="a" style="left:827px;top:403px;width:8px;height:7px;background:repeating-linear-gradient(#5a636e 0 1px,transparent 1px 2px)"></div>
<svg class="a" style="left:826px;top:616px" width="9" height="5"><path d="M0 0 L4.5 5 L9 0 Z" fill="#3e4650"/></svg>

<!-- sheet tab bar -->
<div class="a" style="left:40px;top:627px;width:799px;height:17px;background:linear-gradient(#dfe3e8,#e6e9ee);border-top:1px solid #8e99a6;border-bottom:1px solid #7f8a96"></div>
<div class="a" style="left:40px;top:628px;width:63px;height:15px;background:linear-gradient(#eceff3,#dfe3e8)"></div>
<svg class="a" style="left:45px;top:631px" width="54" height="9" viewBox="0 0 54 9">
<rect x="1" y="0.5" width="1.3" height="8" fill="#2a3a5e"/><path d="M7 0.5 L3 4.5 L7 8.5 Z" fill="#2a3a5e"/>
<path d="M21 0.5 L17 4.5 L21 8.5 Z" fill="#2a3a5e"/>
<path d="M31.5 0.5 L35.5 4.5 L31.5 8.5 Z" fill="#2a3a5e"/>
<path d="M45.5 0.5 L49.5 4.5 L45.5 8.5 Z" fill="#2a3a5e"/><rect x="49.7" y="0.5" width="1.3" height="8" fill="#2a3a5e"/>
</svg>
<svg class="a" style="left:100px;top:627px" width="212" height="17" viewBox="0 0 212 17">
<path d="M3 0 L66 0 L51 16 L3 16 Z" fill="#fff"/>
<path d="M3.5 0 V16.5" stroke="#8e99a6"/>
<path d="M51 16.5 L66 0.5 L118.5 0.5 L104.5 16.5 Z" fill="#e3e7ed" stroke="#8e99a6"/>
<path d="M104.5 16.5 L118.5 0.5 L170.5 0.5 L157 16.5 Z" fill="#e3e7ed" stroke="#8e99a6"/>
<path d="M157 16.5 L171 0.5 L204.5 0.5 L190 16.5 Z" fill="#e3e7ed" stroke="#8e99a6"/>
<path d="M4 16.5 H51" stroke="#7f8a96"/>
</svg>
<svg class="a" style="left:273px;top:629px" width="15" height="12" viewBox="0 0 15 12">
<path d="M3.5 4.5 H13.5 V10.5 H3.5 Z" fill="#dfe9f6" stroke="#2d54a8"/>
<path d="M3 1 L4 3 M0 3 L2 4 M6 0 L5 3 M1 6 L3 5" stroke="#f08a1a" stroke-width="1.3"/>
<circle cx="3.5" cy="3.5" r="1.6" fill="#ffd24a"/>
</svg>
<!-- hscroll -->
<div class="a" style="left:490px;top:628px;width:349px;height:15px;background:linear-gradient(#e4e8ed,#dde2e8)"></div>
<div class="a" style="left:510px;top:627px;width:8px;height:16px;background:#fff;border:1px solid #7d8894"></div>
<div class="a" style="left:513px;top:631px;width:1px;height:8px;background:#6a7480"></div>
<svg class="a" style="left:523px;top:631px" width="5" height="9"><path d="M5 0 L0 4.5 L5 9 Z" fill="#3e4650"/></svg>
<div class="a" style="left:535px;top:627px;width:240px;height:15px;background:linear-gradient(#f2f4f7,#e9ecf0 50%,#dce1e7);border:1px solid #8c96a2;border-radius:2px"></div>
<div class="a" style="left:651px;top:631px;width:7px;height:7px;background:repeating-linear-gradient(90deg,#5a636e 0 1px,transparent 1px 2px)"></div>
<svg class="a" style="left:804px;top:631px" width="5" height="9"><path d="M0 0 L5 4.5 L0 9 Z" fill="#3e4650"/></svg>
<div class="a" style="left:815px;top:627px;width:8px;height:16px;background:#fff;border:1px solid #7d8894"></div>
<div class="a" style="left:818px;top:631px;width:1px;height:8px;background:#6a7480"></div>

<!-- status bar -->
<div class="a" style="left:39px;top:644px;width:801px;height:22px;background:linear-gradient(#fbfcfd,#fbfcfd 1px,#e9ebee 2px,#dcdfe3 50%,#ccd0d5);border-left:1px solid #8e99a6;border-right:1px solid #8e99a6;border-bottom:1px solid #6f7a86"></div>
<div class="a" style="left:94px;top:646px;width:1px;height:17px;background:#a7b0ba"></div>
<svg class="a" style="left:103px;top:646px" width="17" height="15" viewBox="0 0 17 15">
<rect x="2.5" y="2.5" width="13.5" height="11.5" fill="#f4f8fd" stroke="#2d5aae"/>
<rect x="3" y="3" width="12.5" height="2.5" fill="#4f86d8"/>
<path d="M4 7.5 H7 M8.5 7.5 H11 M12 7.5 H15 M4 9.5 H7 M8.5 9.5 H11 M12 9.5 H15 M4 11.5 H7 M8.5 11.5 H11 M12 11.5 H15" stroke="#6d9ad8"/>
<circle cx="3.6" cy="3.6" r="2.8" fill="#f3a04a" stroke="#d2782a" stroke-width=".7"/>
</svg>
<div class="a" style="left:129px;top:646px;width:1px;height:17px;background:#a7b0ba"></div>
<div class="a" style="left:582px;top:646px;width:1px;height:17px;background:#a7b0ba"></div>
<div class="a" style="left:587px;top:645px;width:19px;height:19px;border:1px solid #e8a24a;border-radius:3px;background:linear-gradient(#fde9a8,#fbd56a)"></div>
<svg class="a" style="left:590px;top:649px" width="13" height="11" viewBox="0 0 13 11"><rect x="0.5" y="0.5" width="12" height="10" fill="#fff" stroke="#3a4450"/><path d="M0.5 3.8 H12.5 M0.5 7.2 H12.5 M4.5 0.5 V10.5 M8.5 0.5 V10.5" stroke="#3a4450"/></svg>
<svg class="a" style="left:608px;top:648px" width="14" height="13" viewBox="0 0 14 13"><rect x="0.5" y="0.5" width="13" height="12" fill="#c9ced6" stroke="#4a5460"/><rect x="3.5" y="2.5" width="7" height="8" fill="#fff" stroke="#6a7480"/><path d="M5 5 H9 M5 7 H9" stroke="#8a929e"/></svg>
<svg class="a" style="left:627px;top:648px" width="14" height="13" viewBox="0 0 14 13"><rect x="0.5" y="0.5" width="13" height="12" fill="#c9ced6" stroke="#4a5460"/><rect x="1.5" y="1.5" width="4" height="7" fill="#fff" stroke="#6a7480"/><rect x="6.5" y="1.5" width="3" height="7" fill="#fff" stroke="#6a7480"/></svg>
<div class="a" style="left:704px;top:653px;width:100px;height:1px;background:repeating-linear-gradient(90deg,#8a929c 0 2px,#c8cdd3 2px 3px)"></div>
<div class="a" style="left:688px;top:646px;width:16px;height:16px;border-radius:8px;border:1px solid #7a848e;background:radial-gradient(circle at 50% 35%,#fff,#e4e7eb)"></div>
<div class="a" style="left:692px;top:653px;width:8px;height:2px;background:#3a4450"></div>
<svg class="a" style="left:749px;top:647px" width="10" height="13" viewBox="0 0 10 13"><path d="M0.5 0.5 H9.5 V8 L5 12.5 L0.5 8 Z" fill="#f4f6f8" stroke="#6a7480"/></svg>
<div class="a" style="left:804px;top:646px;width:16px;height:16px;border-radius:8px;border:1px solid #7a848e;background:radial-gradient(circle at 50% 35%,#fff,#e4e7eb)"></div>
<div class="a" style="left:808px;top:653px;width:8px;height:2px;background:#3a4450"></div>
<div class="a" style="left:811px;top:650px;width:2px;height:8px;background:#3a4450"></div>
<svg class="a" style="left:828px;top:654px" width="10" height="10" viewBox="0 0 10 10"><g fill="#a0a8b2"><rect x="8" y="0" width="2" height="2"/><rect x="5" y="3" width="2" height="2"/><rect x="8" y="3" width="2" height="2"/><rect x="2" y="6" width="2" height="2"/><rect x="5" y="6" width="2" height="2"/><rect x="8" y="6" width="2" height="2"/></g></svg>
<!-- texts -->
<svg class="a" style="left:0;top:0;pointer-events:none" width="879" height="705">
<text x="349.50" y="50" font-size="12.5" font-weight="400" fill="#1a1a1a" textLength="178.47" lengthAdjust="spacing">Книга55551.xlsx &#160;- &#160;Microsoft Excel</text>
<text x="54.70" y="76" font-size="11" font-weight="400" fill="#ffffff" stroke="#ffffff" stroke-width="0.25" textLength="26.35" lengthAdjust="spacing">Файл</text>
<text x="103.40" y="76" font-size="11" font-weight="400" fill="#262626" textLength="41.88" lengthAdjust="spacing">Главная</text>
<text x="157.60" y="76" font-size="11" font-weight="400" fill="#262626" textLength="40.29" lengthAdjust="spacing">Вставка</text>
<text x="210.60" y="76" font-size="11" font-weight="400" fill="#262626" textLength="47.45" lengthAdjust="spacing">Разметка</text>
<text x="275.00" y="76" font-size="11" font-weight="400" fill="#262626" textLength="47.88" lengthAdjust="spacing">Формулы</text>
<text x="334.80" y="76" font-size="11" font-weight="400" fill="#262626" textLength="41.25" lengthAdjust="spacing">Данные</text>
<text x="388.70" y="76" font-size="11" font-weight="400" fill="#262626" textLength="50.46" lengthAdjust="spacing">Рецензир</text>
<text x="451.30" y="76" font-size="11" font-weight="400" fill="#262626" textLength="20.21" lengthAdjust="spacing">Вид</text>
<text x="546.90" y="76" font-size="11" font-weight="400" fill="#262626" textLength="51.11" lengthAdjust="spacing">Надстрой</text>
<text x="609.00" y="76" font-size="11" font-weight="400" fill="#262626" textLength="48.71" lengthAdjust="spacing">Foxit PDF</text>
<text x="51.00" y="135" font-size="11" font-weight="400" fill="#262626" textLength="28.20" lengthAdjust="spacing">Темы</text>
<text x="131.80" y="135" font-size="11" font-weight="400" fill="#262626" textLength="26.67" lengthAdjust="spacing">Поля</text>
<text x="189.50" y="101" font-size="11" font-weight="400" fill="#262626" textLength="66.45" lengthAdjust="spacing">Ориентация</text>
<text x="188.50" y="123" font-size="11" font-weight="400" fill="#262626" textLength="37.31" lengthAdjust="spacing">Размер</text>
<text x="189.50" y="145" font-size="11" font-weight="400" fill="#262626" textLength="84.63" lengthAdjust="spacing">Область печати</text>
<text x="308.40" y="101" font-size="11" font-weight="400" fill="#262626" textLength="46.10" lengthAdjust="spacing">Разрывы</text>
<text x="308.40" y="123" font-size="11" font-weight="400" fill="#262626" textLength="54.48" lengthAdjust="spacing">Подложка</text>
<text x="308.40" y="145" font-size="11" font-weight="400" fill="#262626" textLength="107.46" lengthAdjust="spacing">Печатать заголовки</text>
<text x="451.60" y="101" font-size="11" font-weight="400" fill="#262626" textLength="48.45" lengthAdjust="spacing">Ширина:</text>
<text x="451.70" y="123" font-size="11" font-weight="400" fill="#262626" textLength="40.94" lengthAdjust="spacing">Высота:</text>
<text x="451.60" y="145" font-size="11" font-weight="400" fill="#262626" textLength="51.72" lengthAdjust="spacing">Масштаб:</text>
<text x="507.20" y="101" font-size="11" font-weight="400" fill="#1a1a1a" textLength="23.78" lengthAdjust="spacing">Авто</text>
<text x="507.20" y="123" font-size="11" font-weight="400" fill="#1a1a1a" textLength="23.78" lengthAdjust="spacing">Авто</text>
<text x="519.80" y="145" font-size="11" font-weight="400" fill="#1a1a1a" textLength="28.34" lengthAdjust="spacing">125%</text>
<text x="587.40" y="101" font-size="11" font-weight="400" fill="#262626" textLength="28.81" lengthAdjust="spacing">Сетка</text>
<text x="607.30" y="123" font-size="11" font-weight="400" fill="#262626" textLength="20.21" lengthAdjust="spacing">Вид</text>
<text x="607.30" y="145" font-size="11" font-weight="400" fill="#262626" textLength="38.55" lengthAdjust="spacing">Печать</text>
<text x="661.90" y="101" font-size="11" font-weight="400" fill="#262626" textLength="55.38" lengthAdjust="spacing">Заголовки</text>
<text x="682.20" y="123" font-size="11" font-weight="400" fill="#262626" textLength="20.21" lengthAdjust="spacing">Вид</text>
<text x="682.20" y="145" font-size="11" font-weight="400" fill="#262626" textLength="38.35" lengthAdjust="spacing">Печать</text>
<text x="735.00" y="133" font-size="11" font-weight="400" fill="#262626" textLength="71.47" lengthAdjust="spacing">Упорядочить</text>
<text x="66.00" y="165" font-size="11" font-weight="400" fill="#5e6a78" textLength="27.10" lengthAdjust="spacing">Темы</text>
<text x="204.00" y="165" font-size="11" font-weight="400" fill="#5e6a78" textLength="115.51" lengthAdjust="spacing">Параметры страницы</text>
<text x="470.30" y="165" font-size="11" font-weight="400" fill="#5e6a78" textLength="44.09" lengthAdjust="spacing">Вписать</text>
<text x="599.60" y="165" font-size="11" font-weight="400" fill="#5e6a78" textLength="92.40" lengthAdjust="spacing">Параметры листа</text>
<text x="102.70" y="189" font-size="12" font-weight="400" fill="#1a1a1a" textLength="16.14" lengthAdjust="spacing">H8</text>
<text x="46.80" y="658" font-size="11" font-weight="400" fill="#262626" textLength="37.17" lengthAdjust="spacing">Готово</text>
<text x="652.00" y="658" font-size="11" font-weight="400" fill="#262626" textLength="27.64" lengthAdjust="spacing">100%</text>
<text x="112.20" y="640" font-size="11.5" font-weight="700" fill="#1a1a1a" textLength="34.56" lengthAdjust="spacing">Лист1</text>
<text x="166.30" y="640" font-size="11.5" font-weight="400" fill="#262626" textLength="33.09" lengthAdjust="spacing">Лист2</text>
<text x="218.80" y="640" font-size="11.5" font-weight="400" fill="#262626" textLength="33.59" lengthAdjust="spacing">Лист3</text>
<clipPath id="clip484"><rect x="0" y="0" width="537" height="705"/></clipPath>
<text x="483.40" y="76" font-size="11" font-weight="400" fill="#262626" letter-spacing="0.400" clip-path="url(#clip484)">Разработчик</text>
<clipPath id="clip669"><rect x="0" y="0" width="723" height="705"/></clipPath>
<text x="669.90" y="76" font-size="11" font-weight="400" fill="#262626" letter-spacing="-0.656" clip-path="url(#clip669)">ABBYY PDF</text>
</svg>
<!-- /texts -->

</body></html>
